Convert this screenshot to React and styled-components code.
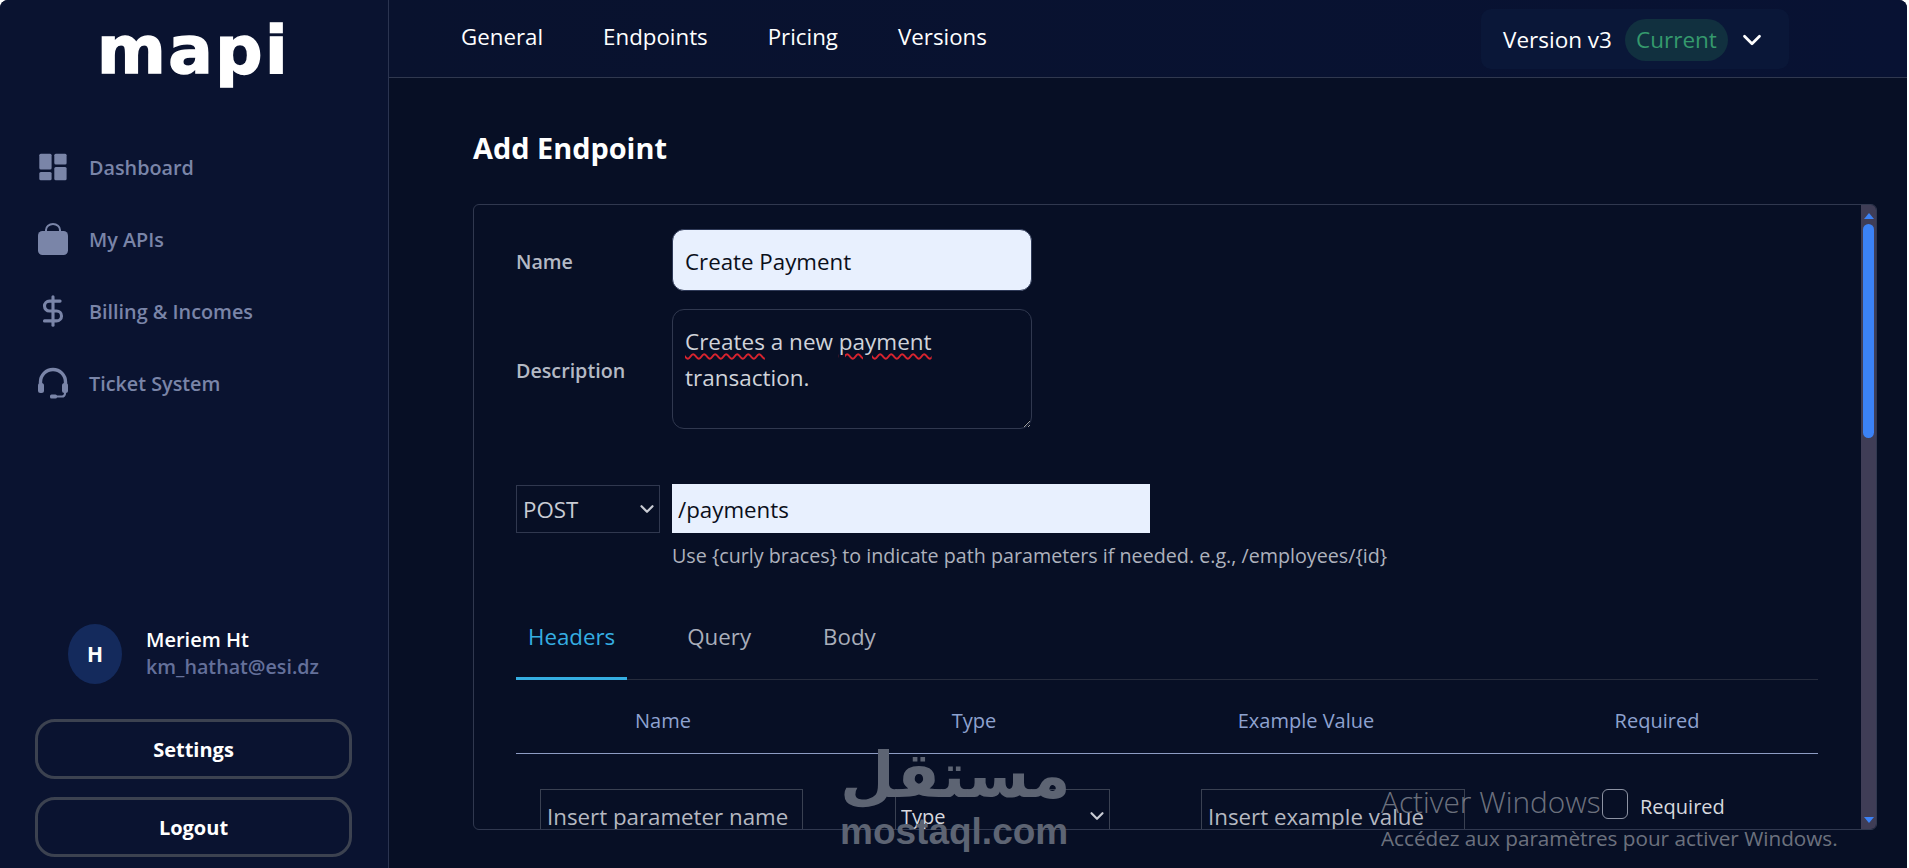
import React from 'react'
import styled, { createGlobalStyle } from 'styled-components'
import { DollarSign, ChevronDown } from 'lucide-react'

const FONT = `"Open Sans", "Noto Sans", sans-serif`

const GlobalStyle = createGlobalStyle`
    html, body {
        margin: 0;
        padding: 0;
        height: 100%;
        background: #ffffff;
        overflow: hidden;
    }
    * {
        box-sizing: border-box;
    }
`

const DashboardIcon = () => (
    <svg width="28" height="28" viewBox="0 0 28 28" fill="currentColor">
        <rect x="0.3" y="0.7" width="12.3" height="15.7" rx="1.5" />
        <rect x="15.3" y="0.7" width="12.3" height="10.7" rx="1.5" />
        <rect x="0.3" y="19" width="12.3" height="8.3" rx="1.5" />
        <rect x="15.3" y="14" width="12.3" height="13.3" rx="1.5" />
    </svg>
)

const BagIcon = () => (
    <svg width="30" height="32" viewBox="0 0 30 32" fill="currentColor">
        <path d="M8 10V7a7 6 0 0 1 14 0v3" fill="none" stroke="currentColor" strokeWidth="2" />
        <rect x="0" y="8" width="30" height="24" rx="4.5" />
    </svg>
)

const HeadsetIcon = () => (
    <svg width="32" height="32" viewBox="0 0 32 32" fill="none" stroke="currentColor">
        <path d="M3.5 18V15a12.5 12.5 0 0 1 25 0v3" strokeWidth="3.4" />
        <rect x="1" y="16" width="6" height="10" rx="2.5" fill="currentColor" stroke="none" />
        <rect x="25" y="16" width="6" height="10" rx="2.5" fill="currentColor" stroke="none" />
        <path d="M28 25v1.5a3 3 0 0 1-3 3h-6" strokeWidth="2.2" />
        <rect x="13" y="27.5" width="7" height="4" rx="1.5" fill="currentColor" stroke="none" />
    </svg>
)

const NAV_ITEMS = [
    { label: 'Dashboard', icon: <DashboardIcon /> },
    { label: 'My APIs', icon: <BagIcon /> },
    { label: 'Billing & Incomes', icon: <DollarSign size={34} strokeWidth={2.2} /> },
    { label: 'Ticket System', icon: <HeadsetIcon /> },
]

const App = () => {
    return (
        <Page>
            <GlobalStyle />
            <Sidebar>
                <Logo>mapi</Logo>
                <Nav>
                    {NAV_ITEMS.map((item) => (
                        <NavItem key={item.label}>
                            <NavIcon>{item.icon}</NavIcon>
                            {item.label}
                        </NavItem>
                    ))}
                </Nav>
                <User>
                    <Avatar>H</Avatar>
                    <div>
                        <UserName>Meriem Ht</UserName>
                        <UserMail>km_hathat@esi.dz</UserMail>
                    </div>
                </User>
                <SideButton>Settings</SideButton>
                <SideButton>Logout</SideButton>
            </Sidebar>
            <Main>
                <TopBar>
                    <TopLinks>
                        <TopLink>General</TopLink>
                        <TopLink>Endpoints</TopLink>
                        <TopLink>Pricing</TopLink>
                        <TopLink>Versions</TopLink>
                    </TopLinks>
                    <VersionPicker>
                        Version v3
                        <CurrentBadge>Current</CurrentBadge>
                        <ChevronDown size={30} strokeWidth={2.2} />
                    </VersionPicker>
                </TopBar>
                <Content>
                    <Title>Add Endpoint</Title>
                    <Panel>
                        <PanelBody>
                            <FieldRow>
                                <FieldLabel>Name</FieldLabel>
                                <NameInput readOnly value="Create Payment" />
                            </FieldRow>
                            <FieldRow $top={18}>
                                <FieldLabel>Description</FieldLabel>
                                <DescriptionBox>
                                    <Misspelled>Creates</Misspelled> a new <Misspelled>payment</Misspelled> transaction.
                                </DescriptionBox>
                            </FieldRow>
                            <FieldRow $top={55}>
                                <SelectFrame $right={12}>
                                    <NativeSelect $width={144} $height={48} defaultValue="POST">
                                        <option>POST</option>
                                        <option>GET</option>
                                    </NativeSelect>
                                    <SelectChevron>
                                        <ChevronDown size={22} strokeWidth={2.4} />
                                    </SelectChevron>
                                </SelectFrame>
                                <PathInput readOnly value="/payments" />
                            </FieldRow>
                            <Hint>Use {'{curly braces}'} to indicate path parameters if needed. e.g., /employees/{'{id}'}</Hint>
                            <Tabs>
                                <Tab $active>Headers</Tab>
                                <Tab>Query</Tab>
                                <Tab>Body</Tab>
                            </Tabs>
                            <HeadRow>
                                <HeadCell>Name</HeadCell>
                                <HeadCell>Type</HeadCell>
                                <HeadCell>Example Value</HeadCell>
                                <HeadCell $shift={22}>Required</HeadCell>
                            </HeadRow>
                            <ParamRow>
                                <ParamCell $left={24}>
                                    <ParamInput $width={263} placeholder="Insert parameter name" />
                                </ParamCell>
                                <ParamCell $left={85}>
                                    <SelectFrame>
                                        <NativeSelect $width={215} $height={54} $small defaultValue="Type">
                                            <option>Type</option>
                                        </NativeSelect>
                                        <SelectChevron>
                                            <ChevronDown size={22} strokeWidth={2.4} />
                                        </SelectChevron>
                                    </SelectFrame>
                                </ParamCell>
                                <ParamCell $left={63}>
                                    <ParamInput $width={264} placeholder="Insert example value" />
                                </ParamCell>
                                <ParamCell $left={128}>
                                    <RequiredLabel>
                                        <CheckBox />
                                        <RequiredText>Required</RequiredText>
                                    </RequiredLabel>
                                </ParamCell>
                            </ParamRow>
                        </PanelBody>
                        <ScrollTrack>
                            <ScrollArrow />
                            <ScrollThumb />
                            <ScrollArrow $down />
                        </ScrollTrack>
                    </Panel>
                </Content>
            </Main>
            <Watermark>
                <WatermarkArabic>مستقل</WatermarkArabic>
                <WatermarkLatin>mostaql.com</WatermarkLatin>
            </Watermark>
            <ActivateNotice>
                <ActivateTitle>Activer Windows</ActivateTitle>
                <ActivateText>Accédez aux paramètres pour activer Windows.</ActivateText>
            </ActivateNotice>
        </Page>
    )
}

const Page = styled.div`
    position: relative;
    display: flex;
    width: 1907px;
    height: 868px;
    overflow: hidden;
    border-radius: 8px 8px 0 0;
    background: #070f25;
    font-family: ${FONT};
`

const Sidebar = styled.aside`
    display: flex;
    flex-direction: column;
    flex: 0 0 389px;
    padding: 0 35px 11px;
    background: #0a1330;
    border-right: 1px solid #2b3450;
`

const Logo = styled.div`
    height: 88px;
    padding: 10px 0 0 62px;
    color: #ffffff;
    font-family: "DejaVu Sans", sans-serif;
    font-weight: 700;
    font-size: 66px;
    line-height: 82px;
    letter-spacing: 2.5px;
    -webkit-text-stroke: 1.5px #ffffff;
`

const Nav = styled.nav`
    display: flex;
    flex-direction: column;
    gap: 36px;
    margin-top: 61px;
    flex: 1;
`

const NavItem = styled.a`
    display: flex;
    align-items: center;
    gap: 18px;
    height: 36px;
    color: #7a85a8;
    font-size: 19.8px;
    font-weight: 600;
`

const NavIcon = styled.span`
    display: flex;
    align-items: center;
    justify-content: center;
    width: 36px;
`

const User = styled.div`
    display: flex;
    align-items: center;
    gap: 24px;
    margin: 0 0 35px 33px;
`

const Avatar = styled.div`
    display: flex;
    align-items: center;
    justify-content: center;
    width: 54px;
    height: 60px;
    border-radius: 50%;
    background: #142a5c;
    color: #ffffff;
    font-size: 21px;
    font-weight: 700;
`

const UserName = styled.div`
    margin-top: -2px;
    color: #ffffff;
    font-size: 20px;
    font-weight: 600;
    line-height: 27px;
`

const UserMail = styled.div`
    color: #64709a;
    font-size: 19.7px;
    font-weight: 600;
    line-height: 27px;
`

const SideButton = styled.button`
    height: 60px;
    width: 317px;
    margin-bottom: 18px;
    border: 3px solid #3c4250;
    border-radius: 20px;
    background: transparent;
    color: #ffffff;
    font-family: inherit;
    font-size: 20px;
    font-weight: 700;

    &:last-child {
        margin-bottom: 0;
    }
`

const Main = styled.main`
    display: flex;
    flex-direction: column;
    flex: 1;
    min-width: 0;
`

const TopBar = styled.header`
    display: flex;
    align-items: center;
    justify-content: space-between;
    flex: 0 0 78px;
    padding: 0 118px 0 72px;
    background: linear-gradient(90deg, #09122e, #081233);
    border-bottom: 1px solid #30384f;
`

const TopLinks = styled.nav`
    display: flex;
    gap: 60px;
    margin-top: -4px;
`

const TopLink = styled.a`
    color: #ffffff;
    font-size: 22.3px;
`

const VersionPicker = styled.div`
    display: flex;
    align-items: center;
    width: 308px;
    height: 60px;
    padding: 2px 0 0 22px;
    border-radius: 10px;
    background: #0a1738;
    color: #ffffff;
    font-size: 22.5px;
`

const CurrentBadge = styled.span`
    display: flex;
    align-items: center;
    justify-content: center;
    width: 103px;
    height: 42px;
    margin: 0 9px 0 13px;
    border-radius: 21px;
    background: #11303f;
    color: #359a6d;
`

const Content = styled.div`
    display: flex;
    flex-direction: column;
    flex: 1;
    min-height: 0;
    padding: 0 30px 38px 84px;
`

const Title = styled.h1`
    height: 126px;
    margin: 0;
    color: #ffffff;
    font-size: 28.9px;
    font-weight: 700;
    line-height: 140px;
`

const Panel = styled.section`
    display: flex;
    flex: 1;
    min-height: 0;
    border: 1px solid #30384f;
    border-radius: 6px;
    overflow: hidden;
`

const PanelBody = styled.div`
    flex: 1;
    min-width: 0;
    padding: 24px 43px 0 42px;
`

const FieldRow = styled.div`
    display: flex;
    align-items: center;
    margin-top: ${(props) => props.$top || 0}px;
`

const FieldLabel = styled.label`
    flex: 0 0 156px;
    padding-top: 2px;
    color: #b4b9c4;
    font-size: 19.7px;
    font-weight: 600;
`

const NameInput = styled.input`
    width: 360px;
    height: 62px;
    padding: 2px 12px 0;
    border: 1px solid #2f3a58;
    border-radius: 12px;
    outline: none;
    background: #e8f0fe;
    color: #0b0f1a;
    font-family: inherit;
    font-size: 22.3px;
`

const DescriptionBox = styled.div`
    width: 360px;
    height: 120px;
    padding: 14px 12px;
    overflow: auto;
    resize: both;
    border: 1px solid #30384f;
    border-radius: 12px;
    color: #d0d3da;
    font-size: 22.5px;
    line-height: 35.5px;
`

const Misspelled = styled.span`
    text-decoration: underline wavy #d9232e 1.5px;
    text-underline-offset: 3px;
`

const SelectFrame = styled.div`
    position: relative;
    display: inline-flex;
    margin-right: ${(props) => props.$right || 0}px;
`

const NativeSelect = styled.select`
    appearance: none;
    width: ${(props) => props.$width}px;
    height: ${(props) => props.$height}px;
    padding: 1px 0 0 ${(props) => (props.$small ? 5 : 6)}px;
    border: 1px solid ${(props) => (props.$small ? '#3a4152' : '#30384f')};
    border-radius: 0;
    outline: none;
    background: transparent;
    color: ${(props) => (props.$small ? '#d7d9df' : '#c9ccd4')};
    font-family: inherit;
    font-size: ${(props) => (props.$small ? 20 : 22.3)}px;
`

const SelectChevron = styled.span`
    position: absolute;
    top: 50%;
    right: 2px;
    display: flex;
    transform: translateY(-50%);
    color: #c9ccd4;
    pointer-events: none;
`

const PathInput = styled.input`
    width: 478px;
    height: 49px;
    padding: 2px 6px 0;
    border: none;
    outline: none;
    background: #e8f0fe;
    color: #0b0f1a;
    font-family: inherit;
    font-size: 22.3px;
`

const Hint = styled.p`
    margin: 8px 0 0 156px;
    color: #aeb2bd;
    font-size: 19.7px;
    line-height: 30px;
`

const Tabs = styled.div`
    display: flex;
    gap: 48px;
    height: 89px;
    margin-top: 20px;
    border-bottom: 1px solid #262c3d;
`

const Tab = styled.a`
    height: 89px;
    padding: 26px 12px 0;
    border-bottom: ${(props) => (props.$active ? '3px solid #35aee2' : 'none')};
    color: ${(props) => (props.$active ? '#35aee2' : '#a9aeba')};
    font-size: 22.3px;
    line-height: 40px;
`

const COLUMNS = '294px 328px 336px 1fr'

const HeadRow = styled.div`
    display: grid;
    grid-template-columns: ${COLUMNS};
    height: 74px;
    padding-top: 8px;
    align-items: center;
    border-bottom: 1px solid #8d9cc4;
`

const HeadCell = styled.div`
    padding-left: ${(props) => props.$shift || 0}px;
    color: #8ea2d0;
    font-size: 20px;
    text-align: center;
`

const ParamRow = styled.div`
    display: grid;
    grid-template-columns: ${COLUMNS};
    padding-top: 35px;
`

const ParamCell = styled.div`
    padding-left: ${(props) => props.$left}px;
`

const ParamInput = styled.input`
    width: ${(props) => props.$width}px;
    height: 54px;
    padding: 0 6px;
    border: 1px solid #3a4152;
    outline: none;
    background: transparent;
    color: #c9ccd4;
    font-family: inherit;
    font-size: 22.3px;

    &::placeholder {
        color: #b5b8c1;
        opacity: 1;
    }
`

const RequiredLabel = styled.label`
    display: flex;
    align-items: flex-start;
    gap: 12px;
    color: #d7d9df;
    font-size: 20px;
`

const RequiredText = styled.span`
    padding-top: 3px;
    line-height: 30px;
`

const CheckBox = styled.span`
    width: 26px;
    height: 30px;
    border: 1px solid #8d93a3;
    border-radius: 6px;
`

const ScrollTrack = styled.div`
    display: flex;
    flex-direction: column;
    flex: 0 0 15px;
    padding: 0 2px;
    background: #3f3d56;
`

const ScrollArrow = styled.div`
    flex: 0 0 auto;
    align-self: center;
    width: 0;
    height: 0;
    margin: ${(props) => (props.$down ? 'auto 0 6px' : '8px 0 5px')};
    border-left: 5px solid transparent;
    border-right: 5px solid transparent;
    border-bottom: ${(props) => (props.$down ? 'none' : '6px solid #3b82f6')};
    border-top: ${(props) => (props.$down ? '6px solid #3b82f6' : 'none')};
`

const ScrollThumb = styled.div`
    flex: 0 0 214px;
    border-radius: 6px;
    background: #3b82f6;
`

const Watermark = styled.div`
    position: absolute;
    left: 840px;
    top: 738px;
    width: 228px;
    color: #5d6473;
    text-align: center;
    pointer-events: none;
`

const WatermarkArabic = styled.div`
    font-family: "DejaVu Sans", sans-serif;
    font-weight: 700;
    font-size: 63px;
    line-height: 76px;
`

const WatermarkLatin = styled.div`
    font-family: "Liberation Sans", sans-serif;
    font-weight: 700;
    font-size: 37px;
    line-height: 36px;
`

const ActivateNotice = styled.div`
    position: absolute;
    left: 1381px;
    top: 782px;
    color: rgba(255, 255, 255, 0.42);
    pointer-events: none;
`

const ActivateTitle = styled.div`
    font-size: 29.8px;
    font-weight: 300;
    line-height: 40px;
`

const ActivateText = styled.div`
    font-size: 20.7px;
    line-height: 32px;
`

export default App
